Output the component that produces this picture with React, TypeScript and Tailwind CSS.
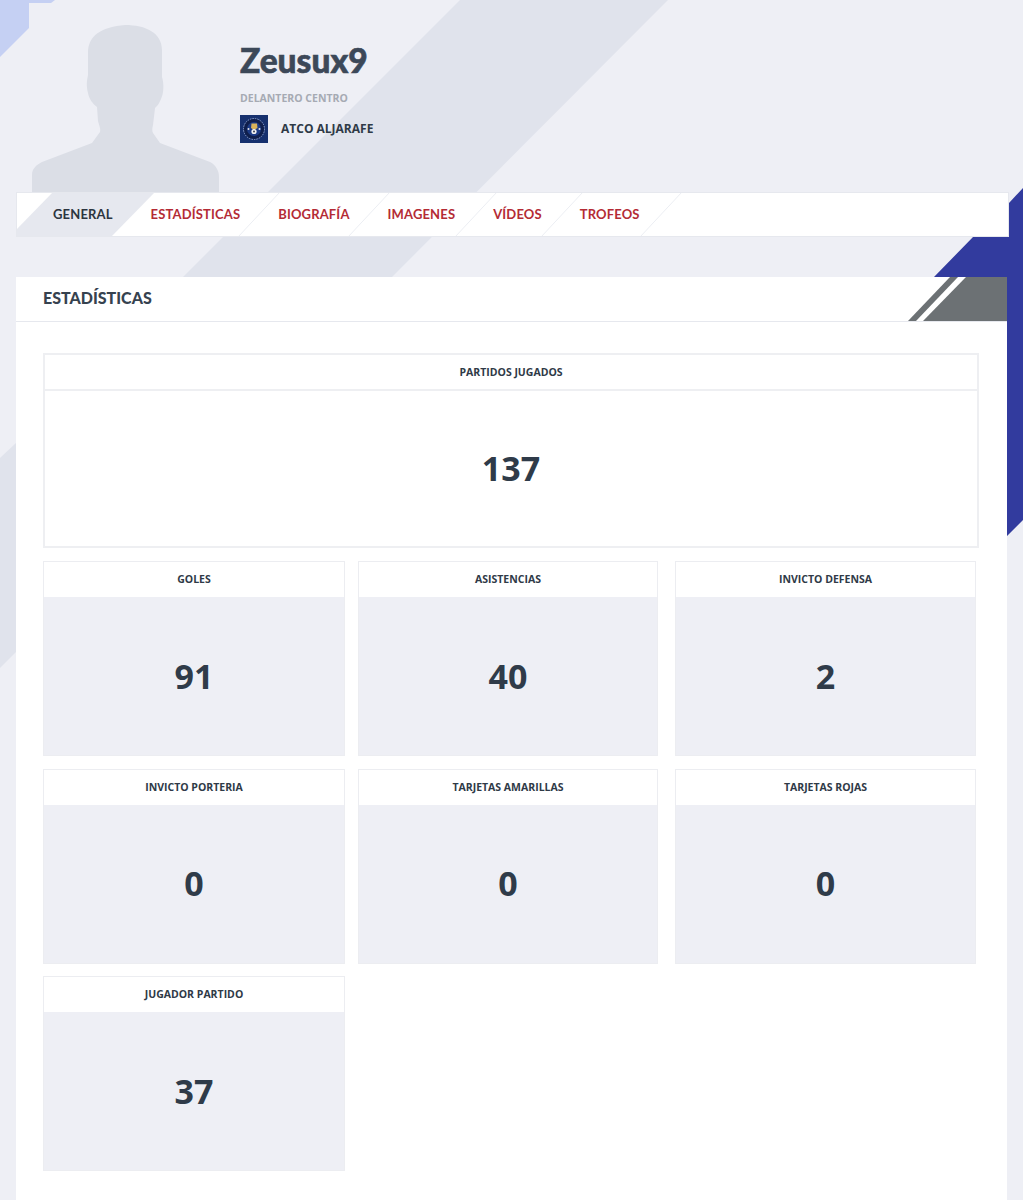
const tabs = ["ESTADÍSTICAS", "BIOGRAFÍA", "IMAGENES", "VÍDEOS", "TROFEOS"];

const stats = [
  { label: "GOLES", value: "91", width: "w-[302px]" },
  { label: "ASISTENCIAS", value: "40", width: "w-[300px]" },
  { label: "INVICTO DEFENSA", value: "2", width: "w-[301px]" },
  { label: "INVICTO PORTERIA", value: "0", width: "w-[302px]" },
  { label: "TARJETAS AMARILLAS", value: "0", width: "w-[300px]" },
  { label: "TARJETAS ROJAS", value: "0", width: "w-[301px]" },
  { label: "JUGADOR PARTIDO", value: "37", width: "w-[302px]" },
];

const bodyFont = "font-['Open_Sans','Noto_Sans',sans-serif]";
const headFont = "font-['Lato','Liberation_Sans',sans-serif]";

function Backdrop() {
  return (
    <svg className="absolute left-0 top-0" width="1023" height="1200" viewBox="0 0 1023 1200">
      <polygon points="0,0 55,0 51,3 29,3 29,28 0,57" fill="#c5d0f3" />
      <polygon points="460,0 668,0 392,277 183,277" fill="#e0e3ec" />
      <polygon points="0,458 16,443 16,652 0,668" fill="#e0e3ec" />
      <polygon points="1023,188 1009,203 1009,237 973,237 934,277 1007,277 1007,536 1023,520" fill="#323b9e" />
    </svg>
  );
}

function Silhouette() {
  return (
    <svg width="187" height="167" viewBox="0 0 187 167" className="block shrink-0">
      <path
        d="M93 0 C114 0 130 8 130 25 L130 52 C132 58 132 68 129 74 C127 79 125 81 123 83 L121 100 C120 104 120 106 121 108 L128 118 L178 137 C184 140 187 146 187 152 L187 167 L0 167 L0 150 C0 144 4 140 10 137 L60 118 L68 107 C69 104 67 100 66 96 L65 82 C61 79 57 74 56 68 C54 60 55 55 56 50 L56 28 C56 10 70 2 93 0 Z"
        fill="#dbdee6"
      />
    </svg>
  );
}

function TeamBadge() {
  return (
    <svg width="28" height="28" viewBox="0 0 28 28" className="block shrink-0">
      <rect width="28" height="28" fill="#16306e" />
      <circle cx="14" cy="14" r="10.5" fill="#0f1f4d" stroke="#8ea2cf" strokeWidth="1" strokeDasharray="1.5 1" />
      <circle cx="14" cy="14" r="7" fill="#1c3b86" />
      <path d="M11.5 8.5 L17 8.5 L17.5 13 L14 15 L11 13 Z" fill="#d9b35a" />
      <circle cx="14" cy="16.5" r="2.6" fill="#f2f2f2" />
      <circle cx="14" cy="16.5" r="1" fill="#3a3f52" />
      <circle cx="8.5" cy="14" r="1" fill="#e8e8e8" />
      <circle cx="19.5" cy="14" r="1" fill="#e8e8e8" />
    </svg>
  );
}

function TabsBackdrop() {
  return (
    <svg className="absolute left-0 top-0" width="993" height="45" viewBox="0 0 993 45">
      <polygon points="37,0 139,0 95,45 0,45 0,38" fill="#e6e8ef" />
      <g stroke="#eceef3" strokeWidth="1">
        <line x1="264" y1="0" x2="222" y2="45" />
        <line x1="374" y1="0" x2="332" y2="45" />
        <line x1="481" y1="0" x2="439" y2="45" />
        <line x1="567" y1="0" x2="525" y2="45" />
        <line x1="666" y1="0" x2="624" y2="45" />
      </g>
      <rect x="0.5" y="0.5" width="992" height="44" fill="none" stroke="#e6e8ee" />
    </svg>
  );
}

function HeaderCorner() {
  return (
    <svg className="absolute right-0 top-0" width="100" height="44" viewBox="0 0 100 44">
      <polygon points="59,0 100,0 100,44 16,44" fill="#6c7174" />
      <polygon points="43,0 51,0 9,44 1,44" fill="#6c7174" />
    </svg>
  );
}

function StatCard({ label, value, width }: { label: string; value: string; width: string }) {
  return (
    <div className={`${width} h-[195px] flex flex-col border border-[#ecedf1] bg-[#eeeff5]`}>
      <div className={`h-[35px] pt-px flex items-center justify-center bg-white text-[10.5px] font-bold text-[#2f3a47] ${bodyFont}`}>
        {label}
      </div>
      <div className={`flex-1 flex items-center justify-center text-[34px] font-bold text-[#2f3b49] ${bodyFont}`}>
        {value}
      </div>
    </div>
  );
}

export default function App() {
  return (
    <div className="relative h-[1200px] overflow-hidden bg-[#eeeff5]">
      <Backdrop />
      <div className="relative">
        <div className="h-[192px] flex items-end pl-[32px]">
          <Silhouette />
          <div className="self-start ml-[21px] pt-[38px]">
            <h1 className={`text-[33.5px] leading-[44px] font-black [-webkit-text-stroke:0.6px_#3c4858] text-[#3c4858] ${headFont}`}>Zeusux9</h1>
            <div className={`mt-[8px] text-[10.5px] leading-[16px] font-bold text-[#a6aab3] ${bodyFont}`}>DELANTERO CENTRO</div>
            <div className="mt-[9px] flex items-center gap-[13px]">
              <TeamBadge />
              <span className={`text-[12px] font-bold text-[#2f3a47] ${bodyFont}`}>ATCO ALJARAFE</span>
            </div>
          </div>
        </div>

        <div className={`relative ml-[16px] w-[993px] h-[45px] bg-white ${headFont}`}>
          <TabsBackdrop />
          <div className="relative h-[45px] flex items-center gap-[38px] pl-[37px] text-[13px] tracking-[0.15px] font-bold">
            <span className="text-[#2c3540]">GENERAL</span>
            {tabs.map((tab) => (
              <span key={tab} className="text-[#b42b35]">
                {tab}
              </span>
            ))}
          </div>
        </div>

        <div className="ml-[16px] mt-[40px] w-[991px] h-[923px] bg-white">
          <div className="relative h-[45px] flex items-center pl-[27px] pb-[2px] border-b border-[#e6e8ee]">
            <HeaderCorner />
            <h2 className={`text-[16px] font-black text-[#36424f] ${headFont}`}>ESTADÍSTICAS</h2>
          </div>
          <div className="pl-[27px] pt-[31px]">
            <div className="w-[936px] h-[195px] flex flex-col border-2 border-[#eeeff2]">
              <div className={`h-[36px] pt-px flex items-center justify-center border-b-2 border-[#eeeff2] text-[10.5px] font-bold text-[#2f3a47] ${bodyFont}`}>
                PARTIDOS JUGADOS
              </div>
              <div className={`flex-1 flex items-center justify-center text-[34px] font-bold text-[#2f3b49] ${bodyFont}`}>
                137
              </div>
            </div>
            <div className="mt-[13px] grid grid-cols-[315px_317px_302px] gap-y-[12.5px]">
              {stats.map((s) => (
                <StatCard key={s.label} label={s.label} value={s.value} width={s.width} />
              ))}
            </div>
          </div>
        </div>
      </div>
    </div>
  );
}
